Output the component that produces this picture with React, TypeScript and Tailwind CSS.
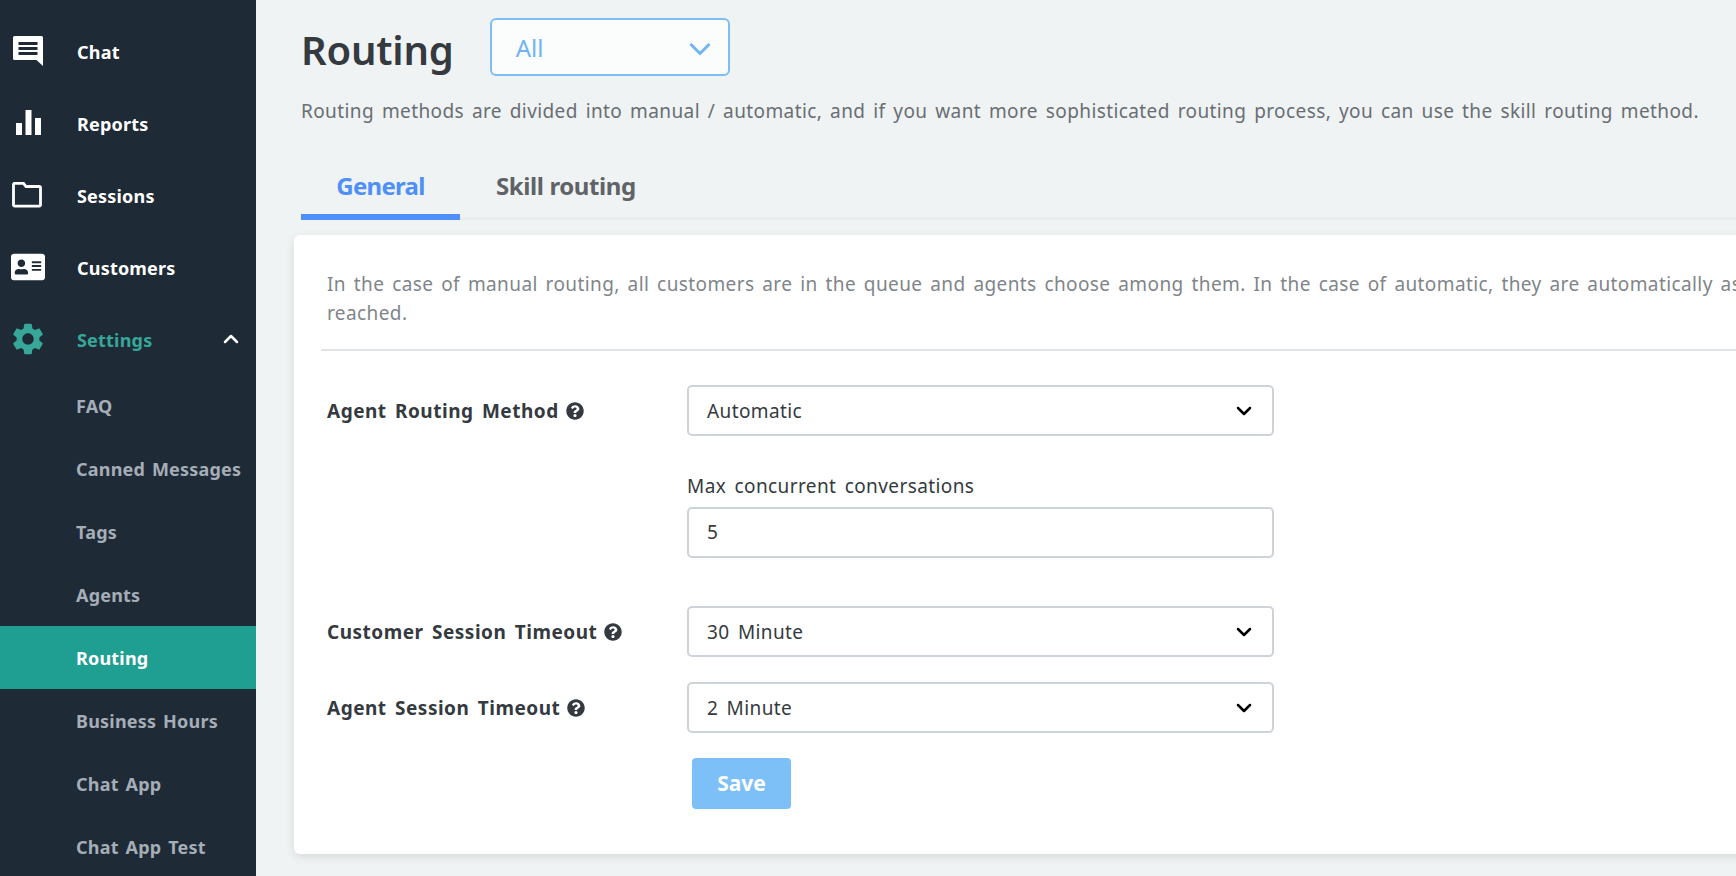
import React from 'react';
import { ChevronDown, ChevronUp } from 'lucide-react';
import { FaAddressCard, FaQuestionCircle } from 'react-icons/fa';
import { MdSettings } from 'react-icons/md';

const ChatIcon = () => (
  <svg width="32" height="32" viewBox="0 0 32 32" fill="none">
    <path d="M2.500 1h27a1.500 1.500 0 0 1 1.500 1.500V31l-6.500-6H2.500A1.500 1.500 0 0 1 1 23.500v-21A1.500 1.500 0 0 1 2.500 1z" fill="#fff" />
    <path d="M6.500 7h19v3h-19zM6.500 12h19v3h-19zM6.500 17h19v3h-19z" fill="#1e2a36" />
  </svg>
);

const BarsIcon = () => (
  <svg width="26" height="26" viewBox="0 0 26 26" fill="#fff">
    <rect x="0" y="13" width="6" height="12" />
    <rect x="9.500" y="0" width="6" height="25" />
    <rect x="19" y="8" width="6" height="17" />
  </svg>
);

const FolderIcon = () => (
  <svg width="30" height="26" viewBox="0 0 30 26" fill="none">
    <path d="M1.500 23V2.500A1.200 1.200 0 0 1 2.700 1.300h8.800l2.500 3.200h13.300a1.200 1.200 0 0 1 1.200 1.200V23a1.200 1.200 0 0 1-1.200 1.200H2.700A1.200 1.200 0 0 1 1.500 23z" stroke="#fff" strokeWidth="2.800" />
  </svg>
);

const mainNav = [
  { label: 'Chat', icon: <ChatIcon /> },
  { label: 'Reports', icon: <BarsIcon /> },
  { label: 'Sessions', icon: <FolderIcon /> },
  { label: 'Customers', icon: <FaAddressCard size={34} color="#fff" /> },
];

const subNav = ['FAQ', 'Canned Messages', 'Tags', 'Agents', 'Routing', 'Business Hours', 'Chat App', 'Chat App Test'];

const Sidebar = () => (
  <aside className="w-[256px] shrink-0 bg-[#1e2a36] pt-[15px] font-bold text-[18px] tracking-[0.2px] [word-spacing:2px]">
    {mainNav.map((item, i) => (
      <div key={item.label} className="h-[72px] flex items-center text-white">
        <div className={`w-[77px] flex items-center ${i === 1 ? 'pl-[16px]' : i === 3 ? 'pl-[11px]' : 'pl-[12px]'}`}>{item.icon}</div>
        <span className="pt-[2px]">{item.label}</span>
      </div>
    ))}
    <div className="h-[72px] flex items-center text-[#36a798]">
      <div className="w-[77px] pl-[9px] flex items-center"><MdSettings size={38} /></div>
      <span className="pt-[2px]">Settings</span>
      <ChevronUp className="ml-auto mr-[13px] text-white" size={24} strokeWidth={2.5} />
    </div>
    <div className="-mt-[1px]">
      {subNav.map(label => (
        <div
          key={label}
          className={`h-[63px] flex items-center pl-[76px] pt-[1px] whitespace-nowrap ${
            label === 'Routing' ? 'bg-[#1f9f91] text-white' : 'text-[#a5adb7]'
          }`}
        >
          {label}
        </div>
      ))}
    </div>
  </aside>
);

const FormSelect = ({ value }: { value: string }) => (
  <div className="w-[587px] h-[51px] border-2 border-[#ced2d9] rounded-[5px] bg-white flex items-center pl-[18px] pr-[16px] text-[19px] text-[#343a40] tracking-[0.4px] [word-spacing:3px]">
    <span className="pt-[1px]">{value}</span>
    <ChevronDown className="ml-auto text-black" size={24} strokeWidth={2.5} />
  </div>
);

const FieldLabel = ({ text }: { text: string }) => (
  <div className="w-[360px] shrink-0 flex items-center gap-[7px] text-[19px] font-bold text-[#343a40] tracking-[0.5px] [word-spacing:3px]">
    <span className="pt-[1px]">{text}</span>
    <FaQuestionCircle size={18} />
  </div>
);

export default function App() {
  return (
    <div className="h-screen w-screen overflow-hidden flex bg-[#eff3f4] font-['Noto_Sans',sans-serif]">
      <Sidebar />
      <main className="flex-1 min-w-0 pl-[38px] overflow-hidden">
        <div className="pl-[7px]">
          <div className="flex items-center pt-[18px] h-[76px]">
            <h1 className="pt-[5px] text-[40px] font-semibold text-[#343a40] leading-none tracking-[-0.2px]">Routing</h1>
            <div className="ml-[36px] w-[240px] h-[58px] border-2 border-[#7cbef5] rounded-[6px] bg-[#fbfcfc] flex items-center pl-[24px] pr-[17px] text-[24px] text-[#6fb5f2]">
              <span className="pt-[1px]">All</span>
              <svg className="ml-auto mt-[3px]" width="22" height="14" viewBox="0 0 22 14" fill="none">
                <path d="M1.500 2 11 11.500 20.500 2" stroke="currentColor" strokeWidth="3" />
              </svg>
            </div>
          </div>
          <p className="mt-[21px] text-[19px] leading-[28px] text-[#696e73] tracking-[0.4px] [word-spacing:2.5px] whitespace-nowrap">
            Routing methods are divided into manual / automatic, and if you want more sophisticated routing process, you can use the skill routing method.
          </p>
          <div className="mt-[29px] h-[66px] flex border-b-[3px] border-[#e9edee] text-[24px] font-bold">
            <div className="w-[159px] h-[66px] pt-[4px] border-b-[6px] border-[#4e8ff9] text-[#4e8ff9] flex items-center justify-center tracking-[-0.7px]">General</div>
            <div className="ml-[36px] h-[63px] flex items-center text-[#5f6367] tracking-[-0.4px]">Skill routing</div>
          </div>
        </div>
        <section className="mt-[15px] w-[1600px] h-[619px] bg-white rounded-[6px] shadow-[0_3px_10px_rgba(0,0,0,0.1)] pt-[35px] pl-[27px]">
          <p className="pl-[6px] text-[19px] leading-[29px] text-[#80858a] tracking-[0.4px] [word-spacing:2.5px] whitespace-nowrap">
            In the case of manual routing, all customers are in the queue and agents choose among them. In the case of automatic, they are automatically assigned until<br />
            reached.
          </p>
          <hr className="mt-[21px] border-0 h-[2px] bg-[#dfe3e6]" />
          <div className="pl-[6px] pt-[34px]">
            <div className="flex items-center"><FieldLabel text="Agent Routing Method" /><FormSelect value="Automatic" /></div>
            <div className="pl-[360px] mt-[36px]">
              <div className="text-[19px] leading-[28px] text-[#343a40] tracking-[0.4px] [word-spacing:3px]">Max concurrent conversations</div>
              <div className="mt-[7px] w-[587px] h-[51px] border-2 border-[#ced2d9] rounded-[5px] bg-white flex items-center pl-[18px] text-[19px] text-[#343a40]">5</div>
            </div>
            <div className="flex items-center mt-[48px]"><FieldLabel text="Customer Session Timeout" /><FormSelect value="30 Minute" /></div>
            <div className="flex items-center mt-[25px]"><FieldLabel text="Agent Session Timeout" /><FormSelect value="2 Minute" /></div>
            <div className="pl-[365px] mt-[25px]">
              <button className="w-[99px] h-[51px] rounded-[4px] bg-[#7dbff7] text-white font-bold text-[21px]">Save</button>
            </div>
          </div>
        </section>
      </main>
    </div>
  );
}
